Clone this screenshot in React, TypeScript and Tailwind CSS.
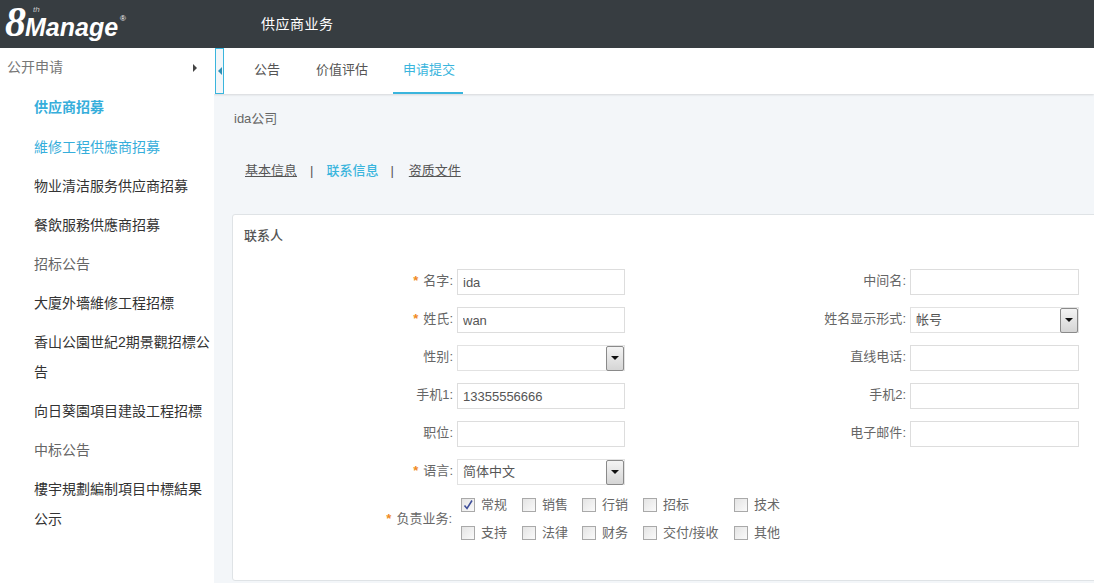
const font = '[font-family:"Liberation_Sans","Noto_Sans_CJK_SC",sans-serif]';

const sideItems: { label: string; kind: 'active' | 'link' | 'plain' | 'group' }[] = [
  { label: '供应商招募', kind: 'active' },
  { label: '維修工程供應商招募', kind: 'link' },
  { label: '物业清洁服务供应商招募', kind: 'plain' },
  { label: '餐飲服務供應商招募', kind: 'plain' },
  { label: '招标公告', kind: 'group' },
  { label: '大廈外墻維修工程招標', kind: 'plain' },
  { label: '香山公園世紀2期景觀招標公告', kind: 'plain' },
  { label: '向日葵園項目建設工程招標', kind: 'plain' },
  { label: '中标公告', kind: 'group' },
  { label: '樓宇規劃編制項目中標結果公示', kind: 'plain' },
];

const sideColors = {
  active: 'text-[#36aedb] font-bold',
  link: 'text-[#36aedb]',
  plain: 'text-[#333333]',
  group: 'text-[#666666]',
};

function Logo() {
  return (
    <div className="relative flex h-12 w-[214px] items-end pb-[9px] pl-[5px] text-white italic">
      <span className="font-['Liberation_Serif',serif] text-[42px] leading-[34px] font-bold">8</span>
      <span className="-ml-[1px] font-['Liberation_Sans',sans-serif] text-[25px] leading-[24px] font-bold">Manage</span>
      <span className="absolute top-[6px] left-[33px] font-['Liberation_Sans',sans-serif] text-[8px] leading-[8px] text-[#cccccc]">th</span>
      <span className="absolute top-[15px] left-[120px] font-['Liberation_Sans',sans-serif] text-[8px] leading-[8px] not-italic">®</span>
    </div>
  );
}

function Sidebar() {
  return (
    <aside className="w-[214px] shrink-0 bg-white">
      <div className="flex h-[39px] items-center justify-between pr-[17px] pl-[7px] text-[14px] text-[#777777]">
        <span>公开申请</span>
        <span className="h-0 w-0 border-y-[4px] border-l-[4px] border-y-transparent border-l-[#444444]" />
      </div>
      <ul className="mt-[5px] pl-[34px]">
        {sideItems.map((item) => (
          <li key={item.label} className={`mb-[9px] text-[14px] leading-[30px] first:mb-[10px] ${sideColors[item.kind]}`}>
            {item.label}
          </li>
        ))}
      </ul>
    </aside>
  );
}

function Tabs() {
  const tabs = ['公告', '价值评估', '申请提交'];
  return (
    <div className="flex h-[46px] bg-white shadow-[0_1px_2px_rgba(0,0,0,0.12)]">
      <div className="ml-px flex w-[9px] shrink-0 items-center justify-center border-[1.5px] border-[#3ab5dd] bg-[#f3f6f9]">
        <span className="h-0 w-0 border-y-[4px] border-r-[4px] border-y-transparent border-r-[#2e8fb5]" />
      </div>
      <div className="ml-[20px] flex">
        {tabs.map((tab, i) => (
          <div
            key={tab}
            className={`flex items-center border-b-2 px-[10px] text-[13px] ${
              i === 2 ? 'ml-[15px] border-[#3ab5dd] pr-[8px] text-[#3ab5dd]' : 'border-transparent text-[#555555]'
            } ${i === 1 ? 'ml-[16px]' : ''}`}
          >
            {tab}
          </div>
        ))}
      </div>
    </div>
  );
}

function TextBox({ value = '', width }: { value?: string; width: string }) {
  return (
    <input
      readOnly
      value={value}
      className={`h-[26px] ${width} border border-[#dddddd] bg-white px-[5px] text-[13px] text-[#555555] outline-none`}
    />
  );
}

function SelectBox({ value = '', width }: { value?: string; width: string }) {
  return (
    <div className={`flex h-[26px] ${width} items-center justify-between border border-[#e2e2e2] bg-white pl-[5px] text-[13px] text-[#555555]`}>
      <span>{value}</span>
      <span className="flex h-[25px] w-[18px] items-center justify-center rounded-[2px] border border-[#8a8a8a] bg-gradient-to-b from-[#f4f4f4] to-[#d5d5d5]">
        <span className="h-0 w-0 border-x-[4px] border-t-[4px] border-x-transparent border-t-[#111111]" />
      </span>
    </div>
  );
}

function Field({
  label,
  required,
  labelWidth,
  children,
}: {
  label: string;
  required?: boolean;
  labelWidth: string;
  children: React.ReactNode;
}) {
  return (
    <div className="flex h-[38px] items-center">
      <label className={`${labelWidth} mr-[4px] shrink-0 pb-[3px] text-right text-[13px] text-[#666666]`}>
        {required && <span className="mr-[5px] font-bold text-[#f08a24]">*</span>}
        {label}:
      </label>
      {children}
    </div>
  );
}

const duties = [
  ['常规', '销售', '行销', '招标', '技术'],
  ['支持', '法律', '财务', '交付/接收', '其他'],
];

function Duties() {
  return (
    <div className="flex items-center">
      <label className="mr-[9px] w-[219px] shrink-0 text-right text-[13px] text-[#666666]">
        <span className="mr-[5px] font-bold text-[#f08a24]">*</span>负责业务:
      </label>
      <div className="grid grid-cols-[61px_60px_61px_91px_60px] gap-y-[14px]">
        {duties.flat().map((item) => (
          <div key={item} className="flex h-[14px] items-center text-[13px] whitespace-nowrap text-[#666666]">
            <span className="mr-[6px] flex h-[14px] w-[14px] shrink-0 items-center justify-center border border-[#a9a9a9] bg-gradient-to-br from-[#e4e4e4] to-[#fafafa]">
              {item === '常规' && (
                <svg viewBox="0 0 12 12" className="h-[12px] w-[12px]">
                  <path d="M2.5 6.5 L5 9.5 L10 1.5" fill="none" stroke="#3f4f9a" strokeWidth="1.6" />
                </svg>
              )}
            </span>
            {item}
          </div>
        ))}
      </div>
    </div>
  );
}

function ContactCard() {
  const left = 'w-[220px]';
  const right = 'w-[280px]';
  return (
    <section className="-mr-[10px] mt-[34px] ml-[18px] h-[367px] rounded-[3px] border border-[#dfe3e6] bg-white">
      <h3 className="mt-[13px] ml-[11px] text-[13px] leading-[16px] font-medium text-[#555555]">联系人</h3>
      <div className="mt-[19px] flex">
        <div className="w-[393px] shrink-0">
          <Field label="名字" required labelWidth={left}><TextBox value="ida" width="w-[168px]" /></Field>
          <Field label="姓氏" required labelWidth={left}><TextBox value="wan" width="w-[168px]" /></Field>
          <Field label="性别" labelWidth={left}><SelectBox width="w-[168px]" /></Field>
          <Field label="手机1" labelWidth={left}><TextBox value="13355556666" width="w-[168px]" /></Field>
          <Field label="职位" labelWidth={left}><TextBox width="w-[168px]" /></Field>
          <Field label="语言" required labelWidth={left}><SelectBox value="简体中文" width="w-[168px]" /></Field>
        </div>
        <div className="flex-1">
          <Field label="中间名" labelWidth={right}><TextBox width="w-[169px]" /></Field>
          <Field label="姓名显示形式" labelWidth={right}><SelectBox value="帐号" width="w-[169px]" /></Field>
          <Field label="直线电话" labelWidth={right}><TextBox width="w-[169px]" /></Field>
          <Field label="手机2" labelWidth={right}><TextBox width="w-[169px]" /></Field>
          <Field label="电子邮件" labelWidth={right}><TextBox width="w-[169px]" /></Field>
        </div>
      </div>
      <div className="mt-[7px]">
        <Duties />
      </div>
    </section>
  );
}

export default function App() {
  return (
    <div className={`flex h-[583px] w-[1094px] flex-col overflow-hidden bg-white ${font}`}>
      <header className="flex h-12 shrink-0 items-center bg-[#373d41]">
        <Logo />
        <span className="ml-[47px] text-[14px] tracking-[0.5px] text-white">供应商业务</span>
      </header>
      <div className="flex min-h-0 flex-1">
        <Sidebar />
        <main className="min-w-0 flex-1 overflow-hidden bg-[#f3f6f9]">
          <Tabs />
          <p className="mt-[16px] ml-[20px] text-[13px] leading-[17px] text-[#666666]">ida公司</p>
          <nav className="mt-[35px] ml-[31px] flex items-center text-[13px] leading-[18px] text-[#555555]">
            <a className="underline">基本信息</a>
            <span className="mx-[13px]">|</span>
            <a className="font-medium text-[#3ab5dd]">联系信息</a>
            <span className="mr-[15px] ml-[12px]">|</span>
            <a className="underline">资质文件</a>
          </nav>
          <ContactCard />
        </main>
      </div>
    </div>
  );
}
